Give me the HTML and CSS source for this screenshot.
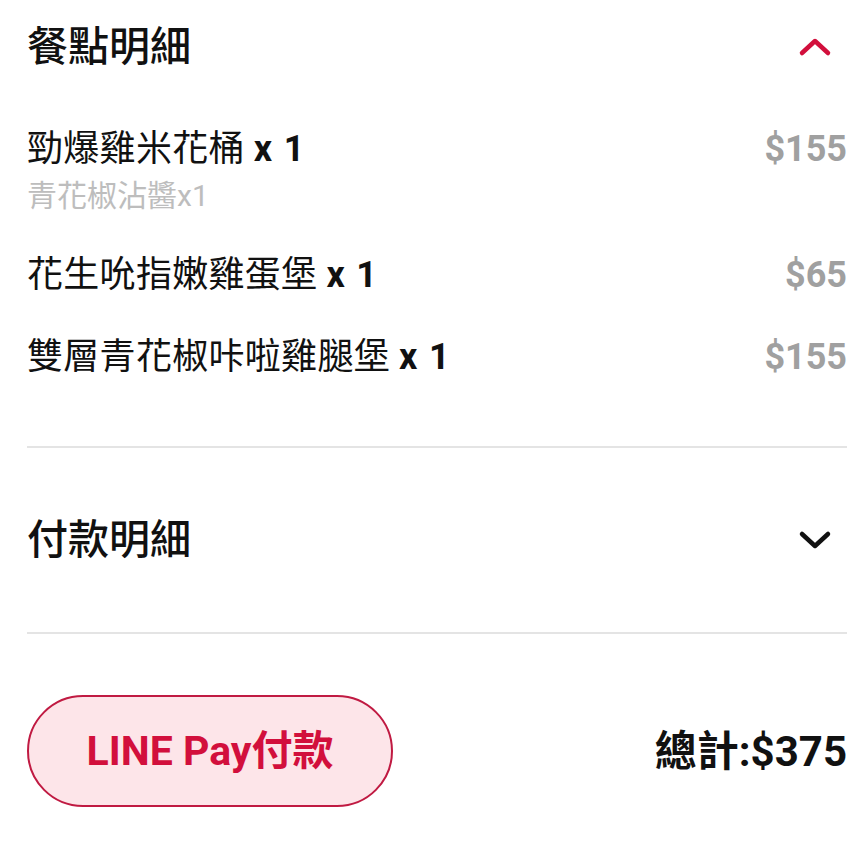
FILE: index.html
```html
<!DOCTYPE html>
<html lang="zh-Hant">
<head>
<meta charset="utf-8">
<link rel="stylesheet" href="styles.css">
</head>
<body>
<div class="page">
  <section class="section">
    <div class="section-head head-open">
      <h2 class="section-title">餐點明細</h2>
      <svg class="chevron chevron-up" width="34" height="20" viewBox="0 0 34 20"><path d="M4 16 L17 4 L30 16" fill="none" stroke="currentColor" stroke-width="4.5" stroke-linecap="round" stroke-linejoin="round"/></svg>
    </div>
    <div class="items">
      <div class="item">
        <div class="item-main">
          <span class="item-name">勁爆雞米花桶<b class="qty">x 1</b></span>
          <span class="item-price">$155</span>
        </div>
        <div class="item-sub">青花椒沾醬x1</div>
      </div>
      <div class="item">
        <div class="item-main">
          <span class="item-name">花生吮指嫩雞蛋堡<b class="qty">x 1</b></span>
          <span class="item-price">$65</span>
        </div>
      </div>
      <div class="item">
        <div class="item-main">
          <span class="item-name">雙層青花椒咔啦雞腿堡<b class="qty">x 1</b></span>
          <span class="item-price">$155</span>
        </div>
      </div>
    </div>
  </section>
  <section class="section">
    <div class="section-head head-closed">
      <h2 class="section-title">付款明細</h2>
      <svg class="chevron chevron-down" width="34" height="20" viewBox="0 0 34 20"><path d="M4 4 L17 16 L30 4" fill="none" stroke="currentColor" stroke-width="4.5" stroke-linecap="round" stroke-linejoin="round"/></svg>
    </div>
  </section>
  <div class="footer">
    <button class="pay-btn">LINE Pay付款</button>
    <div class="total">總計:$375</div>
  </div>
</div>
</body>
</html>
```
FILE: styles.css
```css
* { box-sizing: border-box; }
html, body { margin: 0; padding: 0; background: #fff; }
body {
  font-family: Roboto, "Noto Sans CJK TC", "Noto Sans", sans-serif;
  color: #111;
}
.page {
  width: 867px;
  padding: 0 20px 0 27px;
}
.section {
  border-bottom: 2px solid #e4e4e4;
}
.section-head {
  display: flex;
  align-items: center;
  justify-content: space-between;
}
.head-open { height: 93px; }
.head-closed { height: 184px; }
.section-title {
  margin: 0;
  font-size: 41px;
  font-weight: 500;
  line-height: 48px;
  color: #111;
}
.chevron { margin-right: 15px; }
.chevron-up { color: #d20f3c; }
.chevron-down { color: #111; }
.items {
  display: flex;
  flex-direction: column;
  gap: 42px;
  padding: 36px 0 69px;
}
.item-main {
  display: flex;
  justify-content: space-between;
  align-items: center;
  height: 40px;
}
.item-name {
  font-size: 36px;
  line-height: 40px;
  font-weight: 400;
  color: #111;
  letter-spacing: 0.3px;
}
.qty {
  font-weight: 700;
  margin-left: 9px;
  word-spacing: 2px;
}
.item-price {
  font-size: 36px;
  font-weight: 700;
  color: #a0a0a0;
  line-height: 40px;
}
.item-sub {
  margin-top: 10px;
  font-size: 30px;
  line-height: 34px;
  color: #bdbdbd;
}
.footer {
  display: flex;
  justify-content: space-between;
  align-items: center;
  padding-top: 61px;
}
.pay-btn {
  width: 366px;
  height: 112px;
  border-radius: 56px;
  border: 2px solid #c01a42;
  background: #fde5e9;
  color: #d20f3c;
  font-family: Roboto, "Noto Sans CJK TC", sans-serif;
  font-size: 41px;
  font-weight: 700;
  padding: 0 0 8px;
}
.total {
  font-size: 42px;
  font-weight: 700;
  color: #111;
  margin-bottom: 8px;
}
```
